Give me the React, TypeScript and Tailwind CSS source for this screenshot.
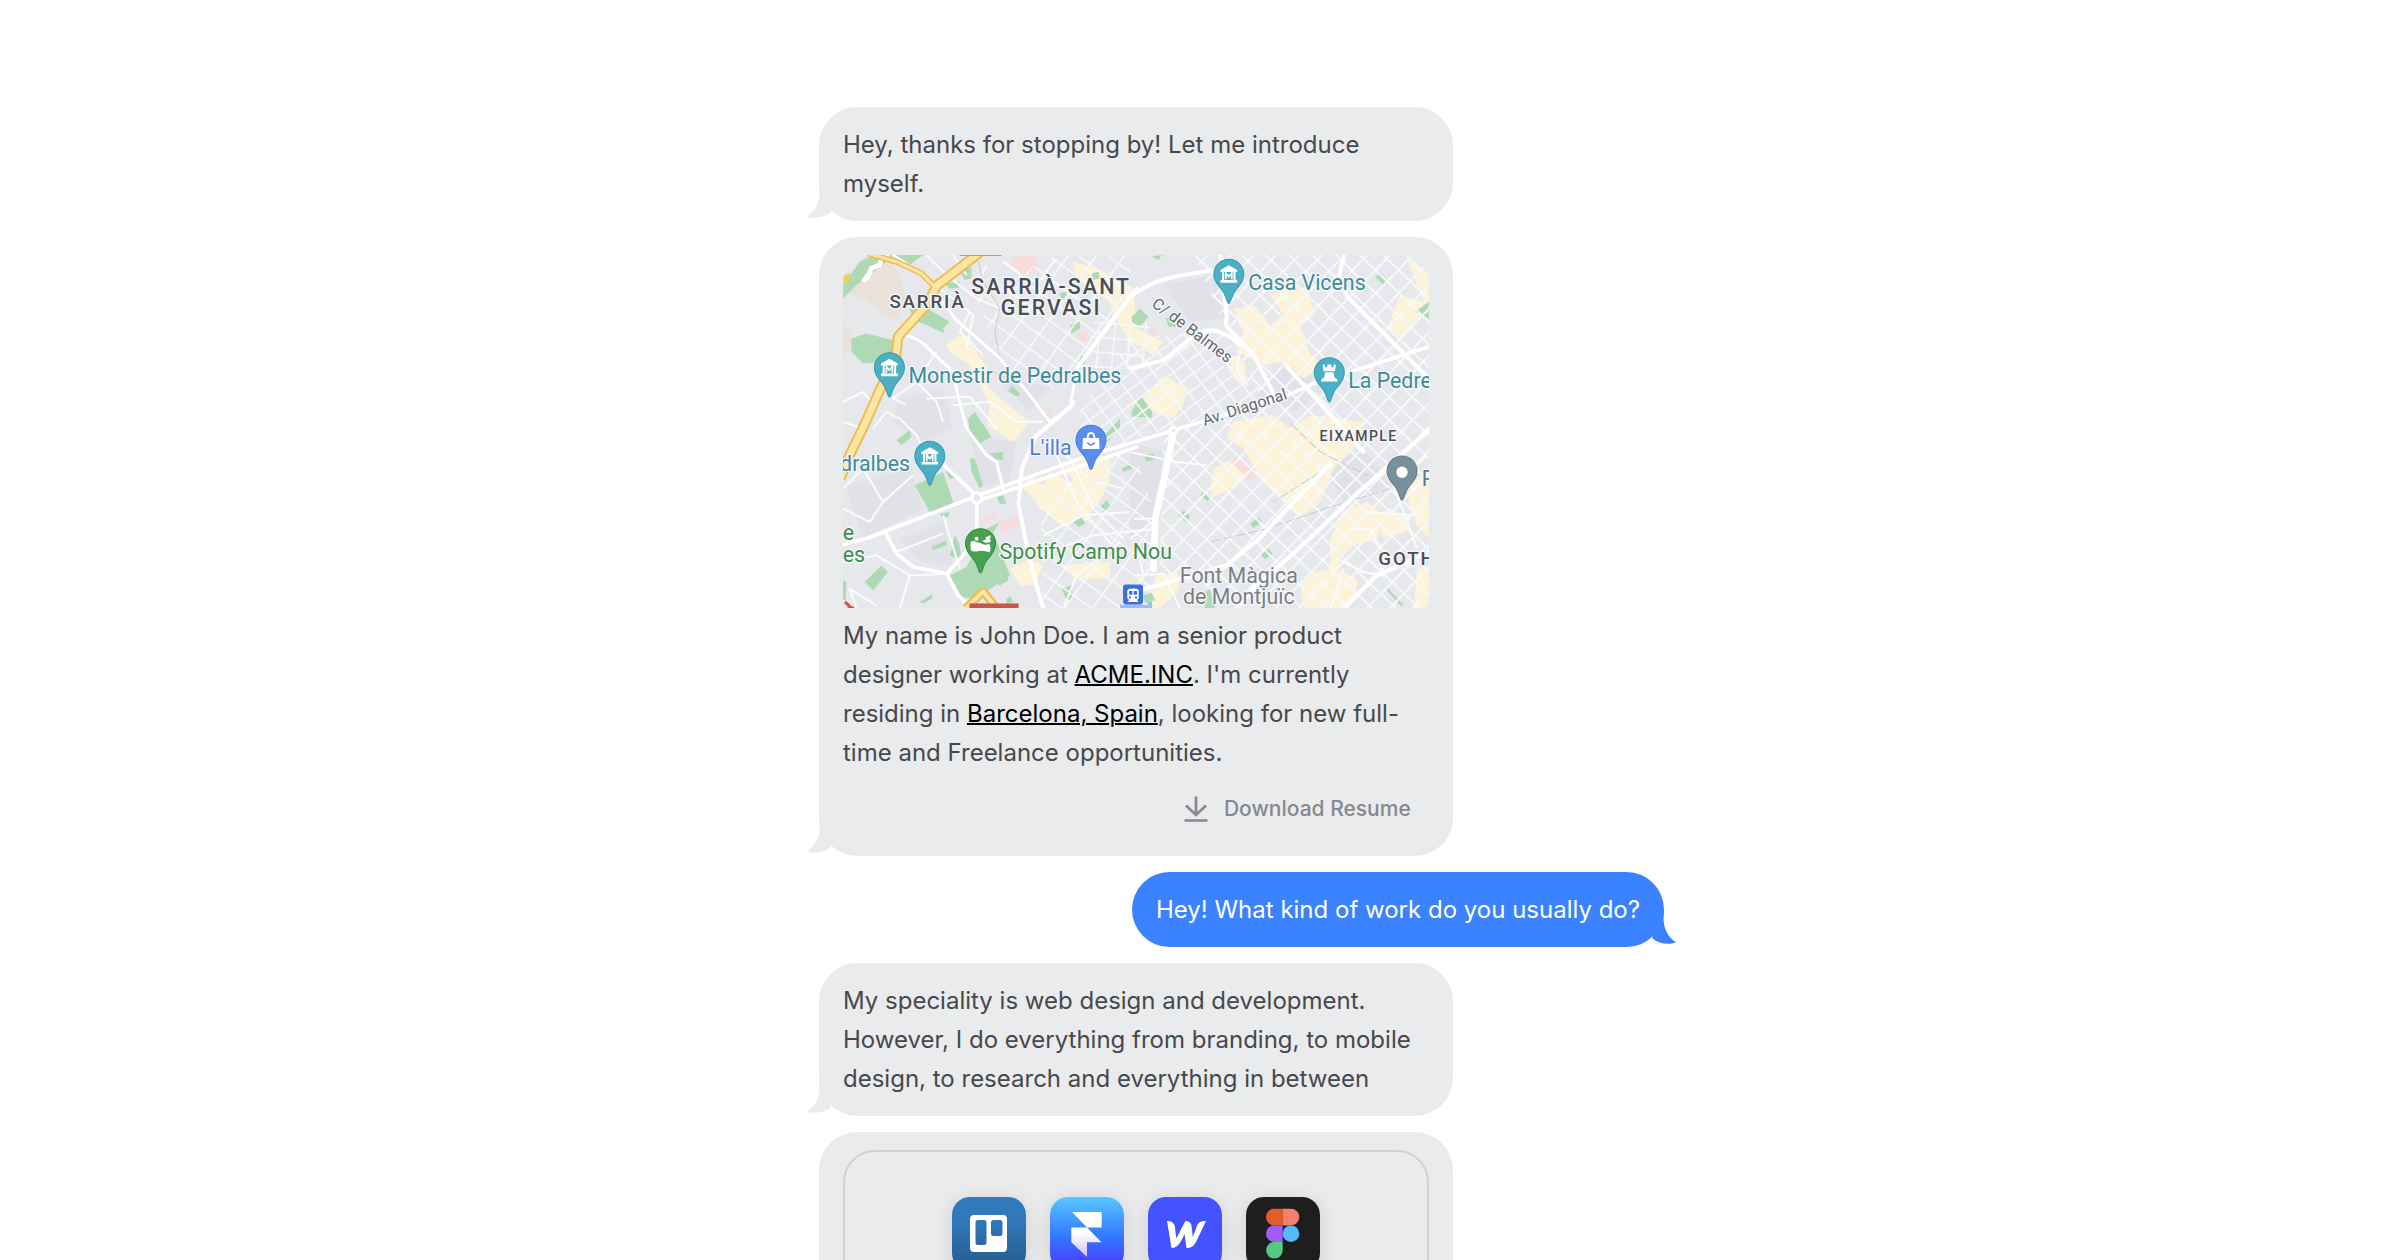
import type { ReactNode } from "react";

type BubbleProps = { side?: "left" | "right"; tail?: boolean; children: ReactNode };

function Tail({ side }: { side: "left" | "right" }) {
  return (
    <svg
      aria-hidden="true"
      viewBox="0 0 24 34"
      className={
        side === "left"
          ? "absolute bottom-[2px] -left-3 h-[34px] w-6 fill-[#eaebed]"
          : "absolute -right-3 bottom-[2px] h-[34px] w-6 -scale-x-100 fill-[#3a82ff]"
      }
    >
      <path d="M12 0C14 14 10 25 0 31.500C8 34 17 33 23.500 27.500L24 0Z" />
    </svg>
  );
}

function Bubble({ side = "left", tail = true, children }: BubbleProps) {
  return (
    <div
      className={
        side === "left"
          ? "relative w-3/4 shrink-0 self-start rounded-[38px] bg-[#eaebed] px-6 py-[18px] text-[#47484b]"
          : "relative shrink-0 self-end rounded-[38px] bg-[#3a82ff] px-6 py-[18px] text-white"
      }
    >
      {tail && <Tail side={side} />}
      <div className="relative">{children}</div>
    </div>
  );
}

type PinKind = "museum" | "rook" | "bag" | "stadium" | "dot";

function PinGlyph({ kind }: { kind: PinKind }) {
  if (kind === "museum") {
    return (
      <g fill="#fff">
        <path d="M0-27L25-13V-7H-25V-13ZM-20-7H-14V17H-20ZM14-7H20V17H14ZM-25 17H25V25H-25Z" />
        <path d="M-9 15V-4L0 7L9-4V15" fill="none" stroke="#fff" strokeWidth="5" />
      </g>
    );
  }
  if (kind === "rook") {
    return (
      <path
        fill="#fff"
        d="M-20-24L-13-25V-17H-6V-25H6V-17H13V-25L20-24L17-5H-17ZM-12-2H12L16 15Q25 18 25 26H-25Q-25 18-16 15Z"
      />
    );
  }
  if (kind === "bag") {
    return (
      <g>
        <path d="M-24-7H24L26 26H-26Z" fill="#fff" />
        <path d="M-10-6Q-10-22 0-22Q10-22 10-6" fill="none" stroke="#fff" strokeWidth="6" />
        <path d="M-11 7Q0 21 11 7" fill="none" stroke="#5b8def" strokeWidth="5" />
      </g>
    );
  }
  if (kind === "stadium") {
    return (
      <g fill="#fff">
        <path d="M-30 2Q-31-8-22-8Q-17-8-14-4Q-2-6 4 0Q14 6 25 0Q34 10 27 26Q10 19-6 22Q-20 26-29 20Z" />
        <circle cx="-12" cy="-15" r="6" />
        <path d="M4-9L16-12V-19L30-25V-17L22-13L30-14V-5L16-2Z" />
      </g>
    );
  }
  return <circle cy="4" r="17" fill="#fff" />;
}

function Pin({ x, y, color, edge, kind }: { x: number; y: number; color: string; edge: string; kind: PinKind }) {
  return (
    <g transform={`translate(${x} ${y})`}>
      <path
        d="M0 88C-6 88-7 62-23 44C-36 30-45 18-45 0A45 45 0 0 1 45 0C45 18 36 30 23 44C7 62 6 88 0 88Z"
        fill={color}
        stroke={edge}
        strokeWidth="3"
      />
      <PinGlyph kind={kind} />
    </g>
  );
}

const TEAL = { color: "#4bb0c5", edge: "#3a98ac" };

function CityMap() {
  return (
    <svg
      role="img"
      aria-label="Map of Barcelona"
      viewBox="0 0 1755 1059"
      className="block w-full rounded-t-[28px] rounded-b-md font-['Roboto',sans-serif]"
    >
      <defs>
        <pattern id="eixample" width="49" height="49" patternUnits="userSpaceOnUse" patternTransform="rotate(44)">
          <path d="M0 3H49M3 0V49" stroke="#f7f8fa" strokeWidth="6" />
        </pattern>
        <pattern id="gracia" width="48" height="38" patternUnits="userSpaceOnUse" patternTransform="rotate(-37)">
          <path d="M0 3H48M3 0V38" stroke="#f7f8fa" strokeWidth="5" />
        </pattern>
        <pattern id="sarria" width="68" height="52" patternUnits="userSpaceOnUse" patternTransform="rotate(36)">
          <path d="M0 3H68M3 0V52" stroke="#f7f8fa" strokeWidth="5" />
        </pattern>
        <pattern id="upright" width="46" height="44" patternUnits="userSpaceOnUse" patternTransform="rotate(5)">
          <path d="M0 3H46M3 0V44" stroke="#f7f8fa" strokeWidth="5" />
        </pattern>
      </defs>

      <rect width="1755" height="1059" fill="#e6e8ec" />
      <g fill="#e0e2e8">
        <path d="M170 430L300 400L330 520L230 560L150 500ZM440 345L620 400L560 470ZM10 690L200 640L240 760L60 850Z" />
        <path d="M170 850L300 800L330 930L230 920ZM860 560L960 590L930 800L860 850ZM380 540L520 560L500 680L420 690Z" />
        <path d="M960 90L1110 60L1150 190L1040 200ZM1240 420L1340 300L1440 400L1360 470ZM1440 640L1560 580L1640 690L1500 740Z" />
      </g>

      {/* beige and commercial areas */}
      <path d="M20 80L130 5L170 60L190 130L160 200L60 130L0 110Z" fill="#eae2d8" />
      <path d="M0 210L30 230L20 290L0 300Z" fill="#eae2d8" />
      <g fill="#fcf3d8">
        <path d="M690 20L760 40L870 100L880 220L960 260L930 300L850 250L790 130L700 70Z" />
        <path d="M310 270L360 235L400 290L440 350L420 380L470 430L520 470L560 500L510 560L430 510L440 450L380 330L320 290Z" />
        <path d="M1280 120L1340 90L1400 130L1410 180L1370 215L1400 300L1440 330L1380 370L1320 320L1270 330L1180 290L1200 240L1170 160L1230 150L1280 210L1320 180Z" />
        <path d="M1340 110L1390 95L1410 165L1345 185Z" />
        <path d="M900 430L960 360L1030 400L1020 450L985 490L930 470Z" />
        <path d="M1160 300L1200 310L1210 370L1190 390L1160 350Z" />
        <path d="M1690 10L1755 60V170L1720 200L1680 250L1630 220L1670 120L1740 140Z" />
        <path d="M1170 500L1290 480L1340 520L1400 480L1560 500L1550 560L1470 640L1430 740L1370 790L1300 720L1250 670L1200 580L1150 550Z" />
        <path d="M1110 640L1170 610L1220 650L1180 690L1100 730Z" />
        <path d="M540 700L560 660L600 690L620 650L680 680L760 620L800 600L800 670L780 720L730 790L650 810L620 780L590 760L580 740Z" />
        <path d="M650 640L760 600L800 620L790 660L700 680Z" />
        <path d="M500 940L560 910L600 930L570 990L530 990ZM650 930L800 920L800 970L700 970Z" />
        <path d="M1460 850L1500 770L1570 740L1620 780L1600 850L1530 870L1490 910L1440 1059H1380L1370 990L1410 950L1480 940L1540 970L1540 1020L1500 1059H1440L1460 910Z" />
        <path d="M1595 780L1640 760L1700 790L1690 830L1620 850ZM1690 700L1755 640V850L1720 810L1700 760ZM940 960L1000 950L1010 1000L950 1059H900Z" />
        <path d="M1720 940L1755 930V1059H1710Z" />
      </g>
      <g fill="#f8dcdc">
        <path d="M510 10L570 0L590 40L550 65L505 30ZM700 235L730 225L735 255L712 262ZM595 475L630 470L615 505Z" />
        <path d="M1160 620L1180 605L1240 655L1220 675ZM470 800L525 780L525 810L475 840ZM410 790L455 770L460 785L415 805ZM925 215L942 225L935 240L920 230Z" />
      </g>

      {/* parks */}
      <g fill="#aed9b5">
        <path d="M0 90L50 20L90 0H240L200 30L130 20L80 60L40 90L0 130Z" />
        <path d="M25 250L70 235L150 255L150 290L130 320L60 325L25 290Z" />
        <path d="M200 160L260 165L320 200L300 220L305 235L250 210L210 195Z" />
        <path d="M350 50L385 35L385 70L365 75ZM310 85L350 80L345 100L315 100ZM650 115L675 105L670 130L655 130ZM745 55L765 50L770 70L750 75Z" />
        <path d="M680 210L710 200L710 220L685 235ZM705 325L715 300L728 325ZM865 185L890 160L915 185L890 215L865 200ZM968 190L985 185L997 215L975 215Z" />
        <path d="M495 410L505 390L530 415L525 425ZM375 490L395 470L445 545L410 565L380 530ZM865 470L891 420L926 470L926 487L865 485Z" />
        <path d="M215 690L300 650L330 740L325 745L260 770ZM380 610L395 610L420 690L410 700L385 650ZM160 555L200 525L205 545L175 570Z" />
        <path d="M460 725L480 720L490 745L470 745ZM305 645L325 655L335 670L320 670ZM290 775L320 770L315 785L295 785ZM265 875L310 855L310 870L270 885Z" />
        <path d="M65 980L115 930L135 950L90 1005ZM320 960L370 935L430 820L470 800L450 830L500 960L400 1030L355 1025Z" />
        <path d="M770 755L790 735L805 755L780 770ZM690 800L715 785L725 805L705 815ZM835 640L865 625L865 640L840 650ZM440 595L480 590L480 615L455 610Z" />
        <path d="M655 1000L685 990L690 1030L670 1035ZM460 980L495 960L495 975L470 990ZM490 1030L500 1020L510 1040L490 1045ZM230 1040L270 1015L265 1030L240 1045Z" />
        <path d="M775 550L830 490L830 520L790 560ZM1595 65L1612 55L1630 75L1618 90ZM1715 170L1755 140V190ZM905 600L930 595L930 615L908 618Z" />
        <path d="M1070 720L1085 705L1103 725L1092 738ZM1005 780L1022 765L1040 785L1028 800ZM1220 805L1245 785L1255 800L1230 818ZM1250 895L1270 875L1288 895L1265 912Z" />
        <path d="M1085 1010L1100 1000L1115 1059H1085ZM1180 600L1200 615L1238 650L1220 640ZM1630 995L1680 1050H1670L1628 1002ZM0 975L10 980L8 1040L0 1030ZM335 840L350 870L355 920L320 900Z" />
        <path d="M1330 335L1385 380L1375 380L1335 345ZM925 5L955 0L945 15ZM900 1020L925 1012L935 1035L905 1045Z" />
      </g>

      {/* street grids */}
      <path d="M1050 0H1755V600L1755 1059H1300L950 960L960 540L1260 440L1150 220Z" fill="url(#eixample)" />
      <path d="M861 250L1130 225L1280 440L940 530L740 600L700 480Z" fill="url(#gracia)" />
      <path d="M400 130L640 0L860 0L860 130L700 340L600 420L470 310Z" fill="url(#sarria)" />
      <path d="M750 200H920L900 340H720Z" fill="url(#upright)" />
      <path d="M590 700L870 570L940 800L930 1059H600Z" fill="url(#sarria)" />

      <g fill="none" stroke="#fafbfc" strokeWidth="6" strokeLinejoin="round">
        <path d="M250 0L310 60L400 130L470 160M330 0L370 60M430 30L390 110M480 20L560 80L630 60M640 10L600 60L700 130" />
        <path d="M0 440L60 410L100 460L60 520L0 500M90 520L130 470L170 490L220 540L250 600M190 450L150 430L220 380L280 290" />
        <path d="M220 380L280 440L300 500M0 700L60 640L120 740L80 800L0 760M120 740L210 660M160 890L300 835M300 780L350 940" />
        <path d="M0 920L100 900L200 960L170 1059M200 960L310 955M40 1059L20 1000L100 1050M330 450L440 440L520 500L600 500" />
        <path d="M250 430L380 425L460 520M380 170L350 230L420 300M290 100L390 180L370 280M600 560L680 610L750 760L840 850" />
        <path d="M600 840L720 780L860 770M590 900L750 840L940 820M640 600L700 740L830 900M660 1059L700 960L830 860M760 680L840 700" />
        <path d="M860 590L1000 620L1090 630M870 790H940L860 850M870 960L960 955L1010 1059M880 870L900 960M1190 290L1180 340L1210 390" />
        <path d="M1480 910L1560 950L1620 960L1600 900M1520 820L1580 820L1610 880M1500 940L1460 1059M1750 600L1650 690L1720 880M1560 770L1720 780" />
      </g>

      <g fill="none" stroke="#c9ccd1" strokeWidth="3">
        <path d="M400 0L420 80L470 160L455 230L470 310" />
        <path d="M1341 505L1430 590L1570 660M1641 700L1460 755L1270 820L1100 860M1461 630L1290 740" strokeDasharray="30 8" />
      </g>

      <g fill="none" stroke="#fff" strokeLinecap="round" strokeLinejoin="round">
        <path
          strokeWidth="9"
          d="M186 240Q240 255 260 285L330 350L346 430L371 520L430 600L460 620L480 700M150 0L240 60L340 195L470 310L560 420L620 500L681 455L700 340L800 200L880 100"
        />
        <path strokeWidth="11" d="M270 600L401 722M401 735V830L360 900L311 955L345 1020L385 1059M126 830L161 895L211 935L311 955" />
        <path strokeWidth="12" d="M690 440L681 455L576 545L536 640L526 745L551 875L580 990L600 1059" />
        <path strokeWidth="12" d="M700 340L861 125Q920 80 991 65L1110 45M1130 0L1150 190Q1140 210 1165 230L1230 300L1290 415M861 340L961 315L1061 235Q1120 205 1190 270" />
        <path strokeWidth="12" d="M1501 0L1486 65L1511 125L1760 375M1331 335L1421 435L1560 590" />
        <path strokeWidth="13" d="M1756 525L1551 705L1371 875L1240 990L1180 1059M1461 625L1241 855L1150 930L960 985L870 1010M1756 890L1600 960L1500 1059" />
        <path strokeWidth="11" d="M0 868L75 848L400 722L720 607L991 525L1321 425L1411 385L1756 275M400 738L880 575" />
        <path strokeWidth="20" d="M991 528L961 675L936 785L930 940" />
      </g>
      <path d="M70 75L85 40L110 30L115 10L140 5M75 60L60 80" fill="none" stroke="#fff" strokeWidth="14" />
      <circle cx="401" cy="728" r="15" fill="#e8e9ed" stroke="#fff" strokeWidth="9" />
      <circle cx="991" cy="526" r="10" fill="#e8e9ed" stroke="#fff" strokeWidth="9" />

      {/* ring road */}
      <g fill="none" strokeLinejoin="round">
        <path d="M75-5L165 22L235 55L275 95" stroke="#edbd55" strokeWidth="18" />
        <path d="M410-8L281 92L250 150L165 245L158 310L110 405L66 505L22 595L-8 670" stroke="#edbd55" strokeWidth="32" />
        <path d="M75-5L165 22L235 55L275 95" stroke="#fbe5a3" strokeWidth="9" />
        <path d="M410-8L281 92L250 150L165 245L158 310L110 405L66 505L22 595L-8 670" stroke="#fbe5a3" strokeWidth="20" />
        <path d="M368 1059L420 1008L460 1059" stroke="#edbd55" strokeWidth="26" />
        <path d="M368 1059L420 1008L460 1059" stroke="#fbe5a3" strokeWidth="12" />
      </g>
      <path d="M350 0H475" stroke="#6d94c4" strokeWidth="5" />
      <path d="M0 62L20 55V75L0 85Z" fill="#f4cf4e" />
      <rect x="379" y="1044" width="147" height="15" fill="#cf5149" />
      <path d="M14 1052L32 1059M6 1040L20 1052" stroke="#cf5149" strokeWidth="9" />
      <path d="M830 1054H920V1040" fill="none" stroke="#9dbdf0" strokeWidth="12" />

      <Pin x={139} y={338} {...TEAL} kind="museum" />
      <Pin x={1156} y={58} {...TEAL} kind="museum" />
      <Pin x={260} y={603} {...TEAL} kind="museum" />
      <Pin x={1457} y={353} {...TEAL} kind="rook" />
      <Pin x={743} y={555} color="#5b8def" edge="#4a79dc" kind="bag" />
      <Pin x={412} y={865} color="#47a14f" edge="#388a41" kind="stadium" />
      <Pin x={1675} y={647} color="#78909c" edge="#657d8a" kind="dot" />

      <rect x="839" y="987" width="60" height="60" rx="9" fill="#3b6fdb" />
      <path
        fill="#fff"
        fillRule="evenodd"
        d="M852 1005Q852 999 869 999Q886 999 886 1005V1027Q886 1033 880 1033L886 1040H852L858 1033Q852 1033 852 1027ZM857 1007V1018H867V1007ZM871 1007V1018H881V1007ZM857 1023V1029H863V1023ZM875 1023V1029H881V1023Z"
      />

      <g stroke="#f5f6f8" strokeWidth="8" strokeLinejoin="round" className="[paint-order:stroke]" fontSize="64">
        <g fill="#4a4d53" className="font-medium">
          <text x="139" y="158" fontSize="56" className="tracking-widest">SARRIÀ</text>
          <g textAnchor="middle" className="tracking-widest">
            <text x="624" y="116">SARRIÀ-SANT</text>
            <text x="624" y="181">GERVASI</text>
          </g>
          <text x="1428" y="558" fontSize="42" className="tracking-widest">EIXAMPLE</text>
          <text x="1604" y="930" fontSize="56" className="tracking-widest">GOTH</text>
        </g>
        <g fill="#3d8c99">
          <text x="196" y="383">Monestir de Pedralbes</text>
          <text x="1214" y="105">Casa Vicens</text>
          <text x="1514" y="398">La Pedrera</text>
          <text x="201" y="648" textAnchor="end">dralbes</text>
        </g>
        <text x="558" y="600" fill="#4f7fe0">L'illa</text>
        <g fill="#3f8f4a">
          <text x="469" y="910">Spotify Camp Nou</text>
          <text x="-1" y="855">e</text>
          <text x="-1" y="920">es</text>
        </g>
        <g fill="#7b7e84" textAnchor="middle">
          <text x="1186" y="982">Font Màgica</text>
          <text x="1186" y="1045">de Montjuïc</text>
        </g>
        <text x="1734" y="692" fill="#607d8b">P</text>
        <g fill="#66696f" fontSize="48">
          <text transform="translate(922 152) rotate(37)">C/ de Balmes</text>
          <text transform="translate(1083 512) rotate(-18)">Av. Diagonal</text>
        </g>
      </g>
    </svg>
  );
}

function DownloadIcon() {
  return (
    <svg aria-hidden="true" viewBox="0 0 24 26" className="h-[26px] w-6" fill="none" stroke="currentColor" strokeWidth="2.700">
      <path d="M12 0.500V18M2 9.500L12 19L22 9.500M0.500 24.500H23.500" />
    </svg>
  );
}

function TrelloLogo() {
  return (
    <svg viewBox="0 0 74 74" role="img" aria-label="Trello">
      <defs>
        <linearGradient id="trello" x2="0" y2="1">
          <stop offset="0.300" stopColor="#3179bb" />
          <stop offset="1" stopColor="#265a8b" />
        </linearGradient>
      </defs>
      <rect width="74" height="74" fill="url(#trello)" />
      <path
        fill="#fff"
        fillRule="evenodd"
        d="M22 18H51Q55 18 55 22V51Q55 55 51 55H22Q18 55 18 51V22Q18 18 22 18ZM26 23Q23.500 23 23.500 25.500V45.500Q23.500 48 26 48H32Q34.500 48 34.500 45.500V25.500Q34.500 23 32 23ZM41.500 23Q39 23 39 25.500V36.500Q39 39 41.500 39H48Q50.500 39 50.500 36.500V25.500Q50.500 23 48 23Z"
      />
    </svg>
  );
}

function FramerLogo() {
  return (
    <svg viewBox="0 0 74 74" role="img" aria-label="Framer">
      <defs>
        <linearGradient id="framer-bg" x2="0" y2="1">
          <stop stopColor="#56c8ff" />
          <stop offset="0.550" stopColor="#3375ff" />
          <stop offset="0.900" stopColor="#4a40ff" />
        </linearGradient>
        <linearGradient id="framer-fold" x2="0" y2="1">
          <stop offset="0.200" stopColor="#fff" />
          <stop offset="1" stopColor="#cdbcf8" />
        </linearGradient>
      </defs>
      <rect width="74" height="74" fill="url(#framer-bg)" />
      <path d="M22 15H51.700V30.500H37Z" fill="#fff" />
      <path d="M21.300 30.500H37L51.500 45.200H37V60L21.300 45.200Z" fill="url(#framer-fold)" />
    </svg>
  );
}

function WebflowLogo() {
  return (
    <svg viewBox="0 0 74 74" role="img" aria-label="Webflow">
      <rect width="74" height="74" fill="#4353ff" />
      <path
        fill="#fff"
        d="M19 24C24.500 24 26.500 26.500 27 30.500L28.300 41.500C31 37 35 28 37.500 24C41 24 43.300 26 43.700 30L44.800 40C46.500 36 48 31.500 48.700 29.500C50 26 52 24 58 24L49 43C46 49 44 51 38.500 51L36.500 37C33.500 43.500 30.500 51 23.500 51Z"
      />
    </svg>
  );
}

function FigmaLogo() {
  return (
    <svg viewBox="0 0 74 74" role="img" aria-label="Figma">
      <rect width="74" height="74" fill="#1e1e1e" />
      <path d="M36.700 11.700H28.300A8.300 8.300 0 0 0 28.300 28.400H36.700Z" fill="#e55c2b" />
      <path d="M36.700 11.700H45A8.300 8.300 0 0 1 45 28.400H36.700Z" fill="#f37f6c" />
      <path d="M36.700 28.400H28.300A8.300 8.300 0 0 0 28.300 45H36.700Z" fill="#a05cf8" />
      <circle cx="45" cy="36.700" r="8.300" fill="#55b8fb" />
      <path d="M36.700 45H28.300A8.300 8.300 0 1 0 36.700 53.300Z" fill="#52cb7f" />
    </svg>
  );
}

const TOOLS = [TrelloLogo, FramerLogo, WebflowLogo, FigmaLogo];

export default function App() {
  return (
    <main className="flex h-screen justify-center overflow-hidden bg-white pt-[107px] pl-[83px] font-['Inter',sans-serif] text-2xl leading-[39px] [font-optical-sizing:none]">
      <div className="flex w-full max-w-[845px] flex-col gap-4">
        <Bubble>
          <p>Hey, thanks for stopping by! Let me introduce myself.</p>
        </Bubble>

        <Bubble>
          <CityMap />
          <p className="mt-2">
            My name is John Doe. I am a senior product designer working at{" "}
            <a href="#acme" className="text-black underline decoration-2">ACME.INC</a>. I'm currently residing in{" "}
            <a href="#barcelona" className="text-black underline decoration-2">Barcelona, Spain</a>, looking for new
            full-time and Freelance opportunities.
          </p>
          <div className="mt-2 flex justify-end">
            <button type="button" className="flex items-center gap-4 px-[18px] py-4 text-[21px] leading-[26px] font-medium text-[#86888f]">
              <DownloadIcon />
              Download Resume
            </button>
          </div>
        </Bubble>

        <Bubble side="right">
          <p>Hey! What kind of work do you usually do?</p>
        </Bubble>

        <Bubble>
          <p>
            My speciality is web design and development. However, I do everything from branding, to mobile design, to
            research and everything in between
          </p>
        </Bubble>

        <Bubble tail={false}>
          <div className="flex justify-center gap-6 rounded-[32px] border-2 border-[#d0d2d5] py-[45px]">
            {TOOLS.map((Logo, i) => (
              <div key={i} className="w-[74px] overflow-hidden rounded-[18px] shadow-[0_4px_20px_rgba(0,0,0,0.120)]">
                <Logo />
              </div>
            ))}
          </div>
        </Bubble>
      </div>
    </main>
  );
}
